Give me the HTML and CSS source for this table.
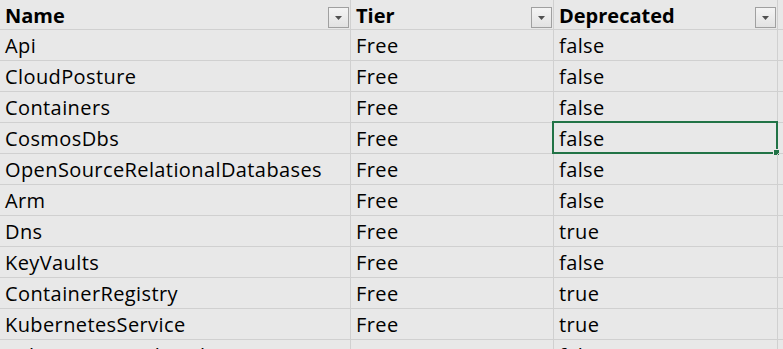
FILE: index.html
```html
<!DOCTYPE html>
<html>
<head>
<meta charset="utf-8">
<link rel="stylesheet" href="styles.css">
</head>
<body>
<div class="sheet">
  <div class="row head">
    <div class="cell c-name">Name<span class="filter"><svg width="7" height="4" viewBox="0 0 7 4"><path d="M0 0H7L3.5 4Z" fill="#505050"/></svg></span></div>
    <div class="cell c-tier">Tier<span class="filter"><svg width="7" height="4" viewBox="0 0 7 4"><path d="M0 0H7L3.5 4Z" fill="#505050"/></svg></span></div>
    <div class="cell c-dep">Deprecated<span class="filter"><svg width="7" height="4" viewBox="0 0 7 4"><path d="M0 0H7L3.5 4Z" fill="#505050"/></svg></span></div>
    <div class="cell c-rest"></div>
  </div>
  <div class="row"><div class="cell c-name">Api</div><div class="cell c-tier">Free</div><div class="cell c-dep">false</div><div class="cell c-rest"></div></div>
  <div class="row"><div class="cell c-name">CloudPosture</div><div class="cell c-tier">Free</div><div class="cell c-dep">false</div><div class="cell c-rest"></div></div>
  <div class="row"><div class="cell c-name">Containers</div><div class="cell c-tier">Free</div><div class="cell c-dep">false</div><div class="cell c-rest"></div></div>
  <div class="row"><div class="cell c-name">CosmosDbs</div><div class="cell c-tier">Free</div><div class="cell c-dep active">false<span class="selection"><span class="handle"></span></span></div><div class="cell c-rest"></div></div>
  <div class="row"><div class="cell c-name">OpenSourceRelationalDatabases</div><div class="cell c-tier">Free</div><div class="cell c-dep">false</div><div class="cell c-rest"></div></div>
  <div class="row"><div class="cell c-name">Arm</div><div class="cell c-tier">Free</div><div class="cell c-dep">false</div><div class="cell c-rest"></div></div>
  <div class="row"><div class="cell c-name">Dns</div><div class="cell c-tier">Free</div><div class="cell c-dep">true</div><div class="cell c-rest"></div></div>
  <div class="row"><div class="cell c-name">KeyVaults</div><div class="cell c-tier">Free</div><div class="cell c-dep">false</div><div class="cell c-rest"></div></div>
  <div class="row"><div class="cell c-name">ContainerRegistry</div><div class="cell c-tier">Free</div><div class="cell c-dep">true</div><div class="cell c-rest"></div></div>
  <div class="row"><div class="cell c-name">KubernetesService</div><div class="cell c-tier">Free</div><div class="cell c-dep">true</div><div class="cell c-rest"></div></div>
  <div class="row"><div class="cell c-name">SqlServerVirtualMachines</div><div class="cell c-tier">Free</div><div class="cell c-dep">false</div><div class="cell c-rest"></div></div>
</div>
</body>
</html>
```

FILE: styles.css
```css
html, body {
  margin: 0;
  padding: 0;
  background: #e8e8e8;
  overflow: hidden;
}

.sheet {
  font-family: "Open Sans", "Liberation Sans", sans-serif;
  font-size: 20px;
  letter-spacing: 0.4px;
  color: #000;
  width: 783px;
}

.row {
  display: grid;
  grid-template-columns: 351px 203px 224px 1fr;
  height: 31px;
}

.row.head {
  height: 30px;
  font-weight: bold;
  letter-spacing: 0;
}

.cell {
  position: relative;
  box-sizing: border-box;
  border-right: 1px solid #d0d0d0;
  border-bottom: 1px solid #d0d0d0;
  padding: 1px 0 0 5px;
  display: flex;
  align-items: center;
  white-space: nowrap;
  overflow: hidden;
}

.c-rest {
  border-right: none;
}

.filter {
  position: absolute;
  right: 1px;
  top: 7px;
  width: 21px;
  height: 21px;
  box-sizing: border-box;
  border: 1px solid #a0a0a0;
  background: linear-gradient(#f4f4f4, #e2e2e2);
  display: flex;
  align-items: center;
  justify-content: center;
}

.active {
  overflow: visible;
}

.selection {
  position: absolute;
  left: -2px;
  top: -2px;
  right: -1px;
  bottom: -1px;
  border: 2px solid #217346;
  pointer-events: none;
}

.handle {
  position: absolute;
  right: -4px;
  bottom: -4px;
  width: 5px;
  height: 5px;
  background: #217346;
  border: 1px solid #e8e8e8;
}
```
